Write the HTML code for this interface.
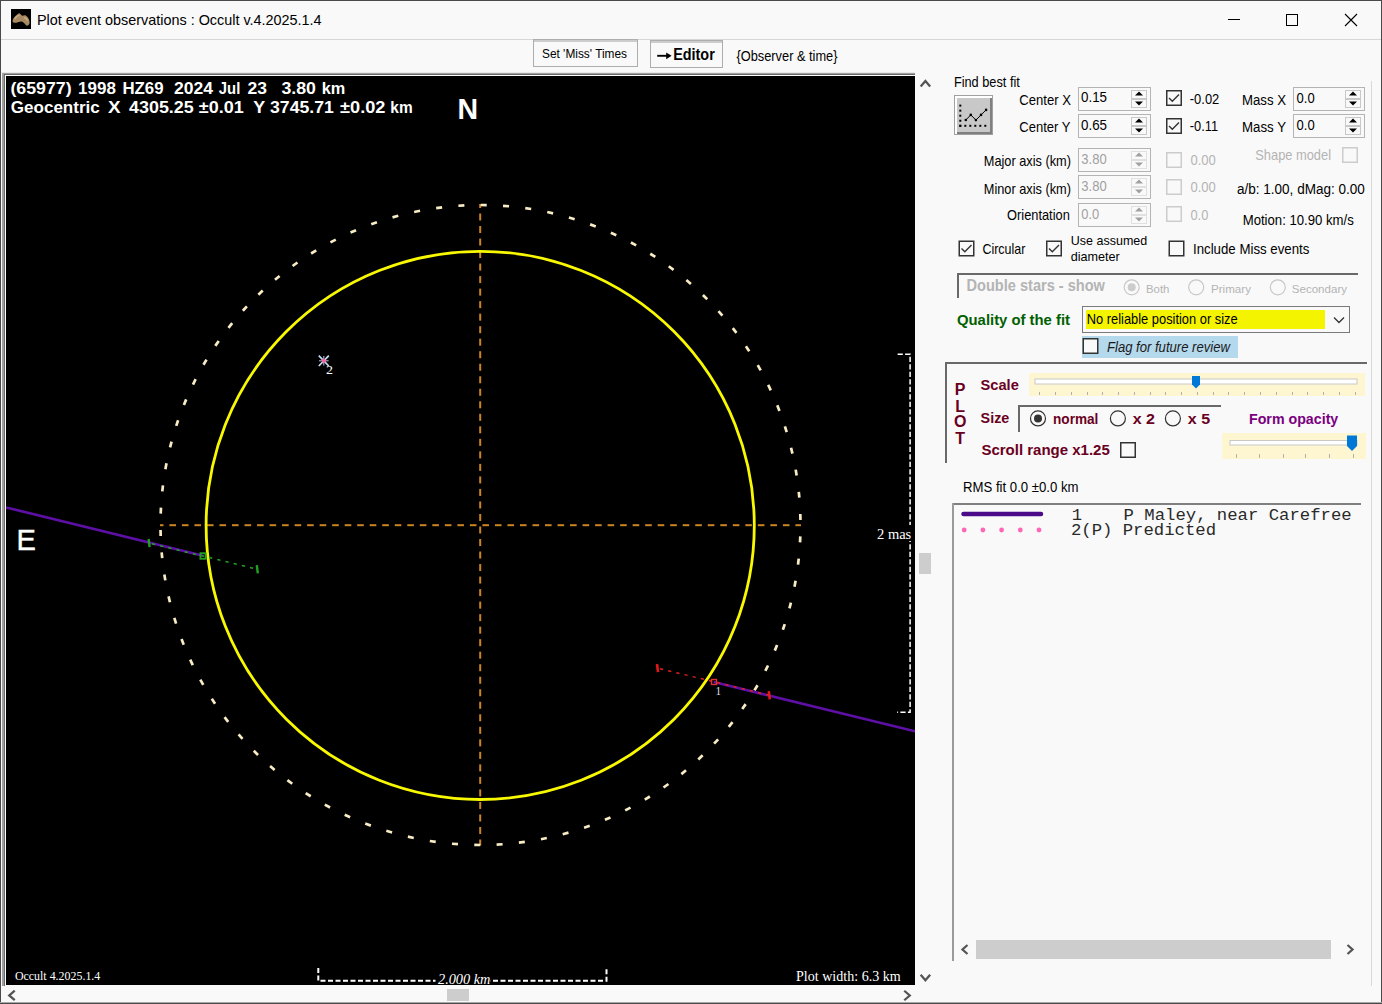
<!DOCTYPE html>
<html><head><meta charset="utf-8"><title>Plot event observations</title>
<style>html,body{margin:0;padding:0;background:#f9f9f9;}body{width:1382px;height:1004px;overflow:hidden;font-family:"Liberation Sans",sans-serif;}svg{display:block}</style>
</head><body>
<svg width="1382" height="1004" viewBox="0 0 1382 1004">
<defs><clipPath id="plotclip"><rect x="6" y="76" width="909" height="909"/></clipPath></defs>
<rect x="0" y="0" width="1382" height="1004" fill="#f9f9f9" />
<rect x="0" y="0" width="1382" height="1" fill="#4a4a4a" />
<rect x="0" y="0" width="1" height="1004" fill="#4a4a4a" />
<rect x="1381" y="0" width="1" height="1004" fill="#4a4a4a" />
<rect x="0" y="1002" width="1382" height="1" fill="#a8a8a8" />
<rect x="0" y="1003" width="1382" height="1" fill="#4a4a4a" />
<rect x="1" y="39" width="1380" height="1" fill="#d6d6d6" />
<rect x="11" y="9" width="20" height="20" fill="#000" />
<path d="M12.6 21.5 C12.5 19 14 17 16 15.5 C17.5 14 18.5 13 19.6 13.2 C20.5 13.5 21 15.5 22.5 15.8 C24 15.2 25.5 14.8 27 16.5 C28.5 18 29.8 20.5 29.6 23 C29.2 25 27.5 26 26.5 25.5 C25 24.5 23.5 22 22 21.5 C20 21 18 22.5 16 22.8 C14.5 23 13 22.8 12.6 21.5 Z" stroke="none" stroke-width="1" fill="#a88a62" />
<path d="M15 19 C16 17 18 15.5 19.5 15.5 M24 18 C25.5 17.5 27 18.5 27.5 21" stroke="#d0b488" stroke-width="1.2" fill="none" />
<text x="37.00" y="24.70" font-family="Liberation Sans" font-size="15" textLength="284.62" lengthAdjust="spacingAndGlyphs" fill="#000"  xml:space="preserve">Plot event observations : Occult v.4.2025.1.4</text>
<rect x="1228" y="19" width="12" height="1" fill="#000" />
<rect x="1286.5" y="14.5" width="11" height="11" fill="none" stroke="#000" stroke-width="1"/>
<path d="M1345 14 L1357 26 M1357 14 L1345 26" stroke="#000" stroke-width="1.1" fill="none" />
<rect x="533.5" y="39.5" width="104" height="27" fill="#f9f9f9" stroke="#adadad" stroke-width="1"/>
<rect x="534" y="40" width="103" height="2" fill="#cccccc" />
<text x="542.00" y="57.50" font-family="Liberation Sans" font-size="12.2" textLength="85.01" lengthAdjust="spacingAndGlyphs" fill="#000"  xml:space="preserve">Set 'Miss' Times</text>
<rect x="650.5" y="40.5" width="72" height="27" fill="#f9f9f9" stroke="#adadad" stroke-width="1"/>
<rect x="651" y="41" width="71" height="2" fill="#cccccc" />
<path d="M657.2 55.8 L669.5 55.8" stroke="#000" stroke-width="1.9" fill="none" />
<path d="M666.2 52.4 L671.6 55.8 L666.2 59.2 Z" stroke="none" stroke-width="1" fill="#000" />
<text x="673.20" y="60.00" font-family="Liberation Sans" font-size="16.3" font-weight="bold" textLength="41.58" lengthAdjust="spacingAndGlyphs" fill="#000"  xml:space="preserve">Editor</text>
<text x="736.50" y="61.20" font-family="Liberation Sans" font-size="14" textLength="101.00" lengthAdjust="spacingAndGlyphs" fill="#000"  xml:space="preserve">{Observer &amp; time}</text>
<rect x="1" y="72" width="914" height="1" fill="#e8e8e8" />
<rect x="2" y="73" width="913" height="1" fill="#a0a0a0" />
<rect x="2" y="73" width="2" height="913" fill="#a0a0a0" />
<rect x="4" y="74" width="911" height="1" fill="#696969" />
<rect x="4" y="74" width="1" height="912" fill="#696969" />
<rect x="5" y="75" width="910" height="1" fill="#ffffff" />
<rect x="5" y="75" width="1" height="911" fill="#ffffff" />
<rect x="6" y="76" width="909" height="909" fill="#000" />
<g clip-path="url(#plotclip)">
<rect x="160.00" y="524.2" width="3.48" height="2" fill="#cc8422" />
<rect x="169.40" y="524.2" width="6.60" height="2" fill="#cc8422" />
<rect x="181.92" y="524.2" width="6.60" height="2" fill="#cc8422" />
<rect x="194.44" y="524.2" width="6.60" height="2" fill="#cc8422" />
<rect x="206.96" y="524.2" width="6.60" height="2" fill="#cc8422" />
<rect x="219.48" y="524.2" width="6.60" height="2" fill="#cc8422" />
<rect x="232.00" y="524.2" width="6.60" height="2" fill="#cc8422" />
<rect x="244.52" y="524.2" width="6.60" height="2" fill="#cc8422" />
<rect x="257.04" y="524.2" width="6.60" height="2" fill="#cc8422" />
<rect x="269.56" y="524.2" width="6.60" height="2" fill="#cc8422" />
<rect x="282.08" y="524.2" width="6.60" height="2" fill="#cc8422" />
<rect x="294.60" y="524.2" width="6.60" height="2" fill="#cc8422" />
<rect x="307.12" y="524.2" width="6.60" height="2" fill="#cc8422" />
<rect x="319.64" y="524.2" width="6.60" height="2" fill="#cc8422" />
<rect x="332.16" y="524.2" width="6.60" height="2" fill="#cc8422" />
<rect x="344.68" y="524.2" width="6.60" height="2" fill="#cc8422" />
<rect x="357.20" y="524.2" width="6.60" height="2" fill="#cc8422" />
<rect x="369.72" y="524.2" width="6.60" height="2" fill="#cc8422" />
<rect x="382.24" y="524.2" width="6.60" height="2" fill="#cc8422" />
<rect x="394.76" y="524.2" width="6.60" height="2" fill="#cc8422" />
<rect x="407.28" y="524.2" width="6.60" height="2" fill="#cc8422" />
<rect x="419.80" y="524.2" width="6.60" height="2" fill="#cc8422" />
<rect x="432.32" y="524.2" width="6.60" height="2" fill="#cc8422" />
<rect x="444.84" y="524.2" width="6.60" height="2" fill="#cc8422" />
<rect x="457.36" y="524.2" width="6.60" height="2" fill="#cc8422" />
<rect x="469.88" y="524.2" width="6.60" height="2" fill="#cc8422" />
<rect x="482.40" y="524.2" width="6.60" height="2" fill="#cc8422" />
<rect x="494.92" y="524.2" width="6.60" height="2" fill="#cc8422" />
<rect x="507.44" y="524.2" width="6.60" height="2" fill="#cc8422" />
<rect x="519.96" y="524.2" width="6.60" height="2" fill="#cc8422" />
<rect x="532.48" y="524.2" width="6.60" height="2" fill="#cc8422" />
<rect x="545.00" y="524.2" width="6.60" height="2" fill="#cc8422" />
<rect x="557.52" y="524.2" width="6.60" height="2" fill="#cc8422" />
<rect x="570.04" y="524.2" width="6.60" height="2" fill="#cc8422" />
<rect x="582.56" y="524.2" width="6.60" height="2" fill="#cc8422" />
<rect x="595.08" y="524.2" width="6.60" height="2" fill="#cc8422" />
<rect x="607.60" y="524.2" width="6.60" height="2" fill="#cc8422" />
<rect x="620.12" y="524.2" width="6.60" height="2" fill="#cc8422" />
<rect x="632.64" y="524.2" width="6.60" height="2" fill="#cc8422" />
<rect x="645.16" y="524.2" width="6.60" height="2" fill="#cc8422" />
<rect x="657.68" y="524.2" width="6.60" height="2" fill="#cc8422" />
<rect x="670.20" y="524.2" width="6.60" height="2" fill="#cc8422" />
<rect x="682.72" y="524.2" width="6.60" height="2" fill="#cc8422" />
<rect x="695.24" y="524.2" width="6.60" height="2" fill="#cc8422" />
<rect x="707.76" y="524.2" width="6.60" height="2" fill="#cc8422" />
<rect x="720.28" y="524.2" width="6.60" height="2" fill="#cc8422" />
<rect x="732.80" y="524.2" width="6.60" height="2" fill="#cc8422" />
<rect x="745.32" y="524.2" width="6.60" height="2" fill="#cc8422" />
<rect x="757.84" y="524.2" width="6.60" height="2" fill="#cc8422" />
<rect x="770.36" y="524.2" width="6.60" height="2" fill="#cc8422" />
<rect x="782.88" y="524.2" width="6.60" height="2" fill="#cc8422" />
<rect x="795.40" y="524.2" width="5.60" height="2" fill="#cc8422" />
<rect x="479.2" y="204.00" width="2" height="3.98" fill="#cc8422" />
<rect x="479.2" y="213.50" width="2" height="7.00" fill="#cc8422" />
<rect x="479.2" y="226.02" width="2" height="7.00" fill="#cc8422" />
<rect x="479.2" y="238.54" width="2" height="7.00" fill="#cc8422" />
<rect x="479.2" y="251.06" width="2" height="7.00" fill="#cc8422" />
<rect x="479.2" y="263.58" width="2" height="7.00" fill="#cc8422" />
<rect x="479.2" y="276.10" width="2" height="7.00" fill="#cc8422" />
<rect x="479.2" y="288.62" width="2" height="7.00" fill="#cc8422" />
<rect x="479.2" y="301.14" width="2" height="7.00" fill="#cc8422" />
<rect x="479.2" y="313.66" width="2" height="7.00" fill="#cc8422" />
<rect x="479.2" y="326.18" width="2" height="7.00" fill="#cc8422" />
<rect x="479.2" y="338.70" width="2" height="7.00" fill="#cc8422" />
<rect x="479.2" y="351.22" width="2" height="7.00" fill="#cc8422" />
<rect x="479.2" y="363.74" width="2" height="7.00" fill="#cc8422" />
<rect x="479.2" y="376.26" width="2" height="7.00" fill="#cc8422" />
<rect x="479.2" y="388.78" width="2" height="7.00" fill="#cc8422" />
<rect x="479.2" y="401.30" width="2" height="7.00" fill="#cc8422" />
<rect x="479.2" y="413.82" width="2" height="7.00" fill="#cc8422" />
<rect x="479.2" y="426.34" width="2" height="7.00" fill="#cc8422" />
<rect x="479.2" y="438.86" width="2" height="7.00" fill="#cc8422" />
<rect x="479.2" y="451.38" width="2" height="7.00" fill="#cc8422" />
<rect x="479.2" y="463.90" width="2" height="7.00" fill="#cc8422" />
<rect x="479.2" y="476.42" width="2" height="7.00" fill="#cc8422" />
<rect x="479.2" y="488.94" width="2" height="7.00" fill="#cc8422" />
<rect x="479.2" y="501.46" width="2" height="7.00" fill="#cc8422" />
<rect x="479.2" y="513.98" width="2" height="7.00" fill="#cc8422" />
<rect x="479.2" y="526.50" width="2" height="7.00" fill="#cc8422" />
<rect x="479.2" y="539.02" width="2" height="7.00" fill="#cc8422" />
<rect x="479.2" y="551.54" width="2" height="7.00" fill="#cc8422" />
<rect x="479.2" y="564.06" width="2" height="7.00" fill="#cc8422" />
<rect x="479.2" y="576.58" width="2" height="7.00" fill="#cc8422" />
<rect x="479.2" y="589.10" width="2" height="7.00" fill="#cc8422" />
<rect x="479.2" y="601.62" width="2" height="7.00" fill="#cc8422" />
<rect x="479.2" y="614.14" width="2" height="7.00" fill="#cc8422" />
<rect x="479.2" y="626.66" width="2" height="7.00" fill="#cc8422" />
<rect x="479.2" y="639.18" width="2" height="7.00" fill="#cc8422" />
<rect x="479.2" y="651.70" width="2" height="7.00" fill="#cc8422" />
<rect x="479.2" y="664.22" width="2" height="7.00" fill="#cc8422" />
<rect x="479.2" y="676.74" width="2" height="7.00" fill="#cc8422" />
<rect x="479.2" y="689.26" width="2" height="7.00" fill="#cc8422" />
<rect x="479.2" y="701.78" width="2" height="7.00" fill="#cc8422" />
<rect x="479.2" y="714.30" width="2" height="7.00" fill="#cc8422" />
<rect x="479.2" y="726.82" width="2" height="7.00" fill="#cc8422" />
<rect x="479.2" y="739.34" width="2" height="7.00" fill="#cc8422" />
<rect x="479.2" y="751.86" width="2" height="7.00" fill="#cc8422" />
<rect x="479.2" y="764.38" width="2" height="7.00" fill="#cc8422" />
<rect x="479.2" y="776.90" width="2" height="7.00" fill="#cc8422" />
<rect x="479.2" y="789.42" width="2" height="7.00" fill="#cc8422" />
<rect x="479.2" y="801.94" width="2" height="7.00" fill="#cc8422" />
<rect x="479.2" y="814.46" width="2" height="7.00" fill="#cc8422" />
<rect x="479.2" y="826.98" width="2" height="7.00" fill="#cc8422" />
<rect x="479.2" y="839.50" width="2" height="6.00" fill="#cc8422" />
<path d="M800.30 536.40L800.03 542.39M798.72 558.68L798.04 564.64M795.60 580.79L794.50 586.69M790.94 602.64L789.43 608.44M784.77 624.10L782.86 629.79M777.11 645.09L774.81 650.63M768.01 665.48L765.33 670.85M757.51 685.20L754.46 690.36M745.66 704.13L742.26 709.07M732.52 722.19L728.78 726.88M718.15 739.29L714.09 743.71M702.63 755.35L698.27 759.47M686.02 770.28L681.38 774.09M668.41 784.02L663.52 787.50M649.88 796.50L644.76 799.62M630.53 807.65L625.20 810.41M610.45 817.43L604.94 819.81M589.73 825.78L584.08 827.77M568.49 832.67L562.70 834.26M546.81 838.05L540.93 839.24M524.81 841.92L518.86 842.69M502.60 844.24L496.61 844.59M480.27 845.00L474.28 844.94M457.95 844.20L451.97 843.73M435.74 841.85L429.81 840.96M413.75 837.96L407.89 836.65M392.08 832.54L386.33 830.83M370.84 825.62L365.23 823.52M350.14 817.24L344.68 814.75M330.07 807.44L324.80 804.57M310.74 796.26L305.68 793.03M292.23 783.75L287.41 780.18M274.64 769.99L270.08 766.09M258.05 755.03L253.78 750.82M242.54 738.96L238.58 734.46M228.20 721.84L224.55 717.07M215.08 703.76L211.78 698.75M203.26 684.81L200.31 679.58M192.79 665.08L190.21 659.66M183.72 644.67L181.53 639.08M176.09 623.67L174.30 617.95M169.95 602.20L168.56 596.36M165.32 580.35L164.34 574.43M162.23 558.23L161.66 552.26M160.69 535.95L160.54 529.95M160.70 513.61L160.97 507.62M162.28 491.33L162.96 485.37M165.40 469.22L166.50 463.32M170.06 447.37L171.57 441.57M176.23 425.91L178.14 420.22M183.88 404.92L186.19 399.38M192.98 384.52L195.67 379.16M203.48 364.81L206.53 359.64M215.33 345.88L218.74 340.94M228.47 327.82L232.21 323.13M242.84 310.72L246.90 306.30M258.37 294.66L262.72 290.54M274.97 279.73L279.61 275.92M292.58 265.99L297.47 262.51M311.11 253.51L316.23 250.38M330.46 242.35L335.79 239.59M350.54 232.58L356.05 230.19M371.26 224.22L376.92 222.23M392.50 217.34L398.29 215.74M414.18 211.95L420.06 210.76M436.18 208.08L442.13 207.31M458.39 205.76L464.38 205.41M480.72 205.00L486.72 205.06M503.04 205.79L509.02 206.27M525.25 208.14L531.18 209.04M547.24 212.04L553.10 213.34M568.91 217.46L574.66 219.17M590.15 224.37L595.77 226.48M610.85 232.75L616.31 235.25M630.92 242.56L636.19 245.43M650.26 253.74L655.31 256.97M668.76 266.24L673.58 269.82M686.36 280.00L690.91 283.91M702.94 294.96L707.22 299.17M718.45 311.04L722.42 315.54M732.79 328.16L736.44 332.92M745.91 346.23L749.22 351.24M757.73 365.18L760.68 370.41M768.21 384.91L770.78 390.33M777.28 405.32L779.47 410.91M784.90 426.32L786.70 432.04M791.05 447.79L792.44 453.63M795.68 469.64L796.66 475.56M798.77 491.76L799.34 497.73M800.31 514.04L800.46 520.04" stroke="#f8ecc4" stroke-width="2.7" fill="none" />
<circle cx="480.2" cy="525.4" r="274.1" fill="none" stroke="#f8f800" stroke-width="2.8"/>
<path d="M6 507.4 L204 555.9" stroke="#5e10a6" stroke-width="2.6" fill="none" />
<path d="M713.7 682 L915 731.3" stroke="#5e10a6" stroke-width="2.6" fill="none" />
<path d="M152 543.8 L257.3 569.2" stroke="#22a022" stroke-width="1.5" fill="none" stroke-dasharray="3.2 5.2"/>
<path d="M148.6 539 L149.6 547.2 M256.8 565.2 L257.8 573.4" stroke="#22a022" stroke-width="2.4" fill="none" />
<rect x="200.4" y="553.2" width="5.2" height="5.6" fill="none" stroke="#22a022" stroke-width="1.8"/>
<path d="M660 668.7 L769.3 695.2" stroke="#e02020" stroke-width="1.5" fill="none" stroke-dasharray="3.2 5.2"/>
<path d="M657 664 L658 672.2 M768.8 691.1 L769.8 699.3" stroke="#e01818" stroke-width="2.6" fill="none" />
<rect x="711.5" y="679.5" width="5" height="5" fill="none" stroke="#e03030" stroke-width="1.4"/>
<text x="715.80" y="695.20" font-family="Liberation Serif" font-size="13.5" textLength="5.20" lengthAdjust="spacingAndGlyphs" fill="#dde8ff"  xml:space="preserve">1</text>
<path d="M318.8 355.6 L328.8 366 M328.8 355.6 L318.8 366" stroke="#c8dcf4" stroke-width="1.7" fill="none" />
<path d="M323.8 356 L323.8 365.5 M319 360.8 L328.6 360.8" stroke="#b8c8e8" stroke-width="1" fill="none" />
<circle cx="323.8" cy="360.8" r="2" fill="#ff5fa0"/>
<text x="326.00" y="373.80" font-family="Liberation Serif" font-size="13.5" textLength="7.00" lengthAdjust="spacingAndGlyphs" fill="#ffffff"  xml:space="preserve">2</text>
<path d="M897.6 354.3 L910.1 354.3 L910.1 712.3 L897.2 712.3" stroke="#ffffff" stroke-width="1.5" fill="none" stroke-dasharray="5.2 2.3"/>
<rect x="875" y="525" width="36" height="16" fill="#000" />
<text x="877.00" y="538.60" font-family="Liberation Serif" font-size="14.5" fill="#ffffff"  xml:space="preserve">2 mas</text>
<path d="M318.3 968 L318.3 980.8 L606.5 980.8 L606.5 968" stroke="#ffffff" stroke-width="2" fill="none" stroke-dasharray="5 2.5"/>
<rect x="435.5" y="970" width="55" height="14" fill="#000" />
<text x="438.00" y="983.90" font-family="Liberation Serif" font-size="14.3" font-style="italic" fill="#ffffff"  xml:space="preserve">2.000 km</text>
<text x="14.90" y="979.70" font-family="Liberation Serif" font-size="12.3" textLength="85.41" lengthAdjust="spacingAndGlyphs" fill="#ffffff"  xml:space="preserve">Occult 4.2025.1.4</text>
<text x="796.00" y="981.10" font-family="Liberation Serif" font-size="14.5" textLength="104.71" lengthAdjust="spacingAndGlyphs" fill="#ffffff"  xml:space="preserve">Plot width: 6.3 km</text>
<text x="457.60" y="118.90" font-family="Liberation Sans" font-size="30" font-weight="bold" textLength="20.59" lengthAdjust="spacingAndGlyphs" fill="#ffffff"  xml:space="preserve">N</text>
<text x="16.60" y="549.60" font-family="Liberation Sans" font-size="29.8" textLength="19.39" lengthAdjust="spacingAndGlyphs" fill="#ffffff" stroke="#ffffff" stroke-width="0.4" xml:space="preserve">E</text>
<text x="10.40" y="93.90" font-family="Liberation Sans" font-size="17.4" font-weight="bold" textLength="61.19" lengthAdjust="spacingAndGlyphs" fill="#ffffff"  xml:space="preserve">(65977)</text>
<text x="78.10" y="93.90" font-family="Liberation Sans" font-size="17.4" font-weight="bold" textLength="37.79" lengthAdjust="spacingAndGlyphs" fill="#ffffff"  xml:space="preserve">1998</text>
<text x="122.40" y="93.90" font-family="Liberation Sans" font-size="17.4" font-weight="bold" textLength="41.11" lengthAdjust="spacingAndGlyphs" fill="#ffffff"  xml:space="preserve">HZ69</text>
<text x="173.90" y="93.90" font-family="Liberation Sans" font-size="17.4" font-weight="bold" textLength="39.09" lengthAdjust="spacingAndGlyphs" fill="#ffffff"  xml:space="preserve">2024</text>
<text x="218.80" y="93.90" font-family="Liberation Sans" font-size="17.4" font-weight="bold" textLength="21.50" lengthAdjust="spacingAndGlyphs" fill="#ffffff"  xml:space="preserve">Jul</text>
<text x="247.50" y="93.90" font-family="Liberation Sans" font-size="17.4" font-weight="bold" textLength="19.50" lengthAdjust="spacingAndGlyphs" fill="#ffffff"  xml:space="preserve">23</text>
<text x="281.40" y="93.90" font-family="Liberation Sans" font-size="17.4" font-weight="bold" textLength="34.48" lengthAdjust="spacingAndGlyphs" fill="#ffffff"  xml:space="preserve">3.80</text>
<text x="321.70" y="93.90" font-family="Liberation Sans" font-size="17.4" font-weight="bold" textLength="23.51" lengthAdjust="spacingAndGlyphs" fill="#ffffff"  xml:space="preserve">km</text>
<text x="10.80" y="113.00" font-family="Liberation Sans" font-size="17.4" font-weight="bold" textLength="88.99" lengthAdjust="spacingAndGlyphs" fill="#ffffff"  xml:space="preserve">Geocentric</text>
<text x="108.00" y="113.00" font-family="Liberation Sans" font-size="17.4" font-weight="bold" textLength="12.59" lengthAdjust="spacingAndGlyphs" fill="#ffffff"  xml:space="preserve">X</text>
<text x="129.00" y="113.00" font-family="Liberation Sans" font-size="17.4" font-weight="bold" textLength="64.80" lengthAdjust="spacingAndGlyphs" fill="#ffffff"  xml:space="preserve">4305.25</text>
<text x="198.80" y="113.00" font-family="Liberation Sans" font-size="17.4" font-weight="bold" textLength="45.00" lengthAdjust="spacingAndGlyphs" fill="#ffffff"  xml:space="preserve">±0.01</text>
<text x="253.30" y="113.00" font-family="Liberation Sans" font-size="17.4" font-weight="bold" textLength="11.99" lengthAdjust="spacingAndGlyphs" fill="#ffffff"  xml:space="preserve">Y</text>
<text x="270.00" y="113.00" font-family="Liberation Sans" font-size="17.4" font-weight="bold" textLength="63.80" lengthAdjust="spacingAndGlyphs" fill="#ffffff"  xml:space="preserve">3745.71</text>
<text x="340.10" y="113.00" font-family="Liberation Sans" font-size="17.4" font-weight="bold" textLength="45.40" lengthAdjust="spacingAndGlyphs" fill="#ffffff"  xml:space="preserve">±0.02</text>
<text x="390.30" y="113.00" font-family="Liberation Sans" font-size="17.4" font-weight="bold" textLength="22.31" lengthAdjust="spacingAndGlyphs" fill="#ffffff"  xml:space="preserve">km</text>
</g>
<path d="M920.65 86.55 L925.4 81.05 L930.15 86.55" stroke="#555555" stroke-width="2.3" fill="none" stroke-linejoin="miter"/>
<path d="M920.65 974.75 L925.4 980.25 L930.15 974.75" stroke="#555555" stroke-width="2.3" fill="none" stroke-linejoin="miter"/>
<rect x="919" y="553" width="12" height="21" fill="#cdcdcd" />
<path d="M14.75 990.65 L9.25 995.4 L14.75 1000.15" stroke="#555555" stroke-width="2.3" fill="none" stroke-linejoin="miter"/>
<path d="M904.25 990.75 L909.75 995.5 L904.25 1000.25" stroke="#555555" stroke-width="2.3" fill="none" stroke-linejoin="miter"/>
<rect x="447" y="989" width="22" height="12" fill="#cdcdcd" />
<rect x="1371" y="81" width="1" height="905" fill="#d9d9d9" />
<text x="953.90" y="86.50" font-family="Liberation Sans" font-size="15" textLength="65.99" lengthAdjust="spacingAndGlyphs" fill="#000"  xml:space="preserve">Find best fit</text>
<rect x="954" y="95" width="39" height="40" fill="#a0a0a0" />
<rect x="955" y="96" width="37" height="38" fill="#ffffff" />
<rect x="957" y="98" width="35" height="36" fill="#808080" />
<rect x="957" y="98" width="33" height="34" fill="#c8c8c8" />
<rect x="959.3" y="104.6" width="2" height="2" fill="#000" />
<rect x="959.3" y="109.64999999999999" width="2" height="2" fill="#000" />
<rect x="959.3" y="114.69999999999999" width="2" height="2" fill="#000" />
<rect x="959.3" y="119.75" width="2" height="2" fill="#000" />
<rect x="959.3" y="124.8" width="2" height="2" fill="#000" />
<rect x="959.3" y="124.8" width="2" height="2" fill="#000" />
<rect x="964.3" y="124.8" width="2" height="2" fill="#000" />
<rect x="969.3" y="124.8" width="2" height="2" fill="#000" />
<rect x="974.3" y="124.8" width="2" height="2" fill="#000" />
<rect x="979.3" y="124.8" width="2" height="2" fill="#000" />
<rect x="984.3" y="124.8" width="2" height="2" fill="#000" />
<path d="M965.8 120 L970.8 114.9 L975.9 120.1 L981 114.9 L986.1 109.9" stroke="#000" stroke-width="1" fill="none" />
<circle cx="965.8" cy="120" r="1.3" fill="#000"/>
<circle cx="970.8" cy="114.9" r="1.3" fill="#000"/>
<circle cx="975.9" cy="120.1" r="1.3" fill="#000"/>
<circle cx="981" cy="114.9" r="1.3" fill="#000"/>
<circle cx="986.1" cy="109.9" r="1.3" fill="#000"/>
<rect x="1078.5" y="87.5" width="72" height="23" fill="#f9f9f9" stroke="#b4b4b4" stroke-width="1"/>
<rect x="1131.5" y="90.5" width="15" height="17" fill="#f9f9f9" stroke="#c8c8c8" stroke-width="1"/>
<rect x="1132" y="98.0" width="14" height="2" fill="#c8c8c8" />
<path d="M1135.0 95.5 L1139.0 91.5 L1143.0 95.5 Z" stroke="none" stroke-width="1" fill="#000" />
<path d="M1135.0 101.5 L1139.0 105.5 L1143.0 101.5 Z" stroke="none" stroke-width="1" fill="#000" />
<rect x="1078.5" y="114.5" width="72" height="23" fill="#f9f9f9" stroke="#b4b4b4" stroke-width="1"/>
<rect x="1131.5" y="117.5" width="15" height="17" fill="#f9f9f9" stroke="#c8c8c8" stroke-width="1"/>
<rect x="1132" y="125.0" width="14" height="2" fill="#c8c8c8" />
<path d="M1135.0 122.5 L1139.0 118.5 L1143.0 122.5 Z" stroke="none" stroke-width="1" fill="#000" />
<path d="M1135.0 128.5 L1139.0 132.5 L1143.0 128.5 Z" stroke="none" stroke-width="1" fill="#000" />
<rect x="1078.5" y="148.5" width="72" height="23" fill="#f9f9f9" stroke="#b4b4b4" stroke-width="1"/>
<rect x="1131.5" y="151.5" width="15" height="17" fill="#f9f9f9" stroke="#e0e0e0" stroke-width="1"/>
<rect x="1132" y="159.0" width="14" height="2" fill="#e0e0e0" />
<path d="M1135.0 156.5 L1139.0 152.5 L1143.0 156.5 Z" stroke="none" stroke-width="1" fill="#a0a0a0" />
<path d="M1135.0 162.5 L1139.0 166.5 L1143.0 162.5 Z" stroke="none" stroke-width="1" fill="#a0a0a0" />
<rect x="1078.5" y="175.5" width="72" height="23" fill="#f9f9f9" stroke="#b4b4b4" stroke-width="1"/>
<rect x="1131.5" y="178.5" width="15" height="17" fill="#f9f9f9" stroke="#e0e0e0" stroke-width="1"/>
<rect x="1132" y="186.0" width="14" height="2" fill="#e0e0e0" />
<path d="M1135.0 183.5 L1139.0 179.5 L1143.0 183.5 Z" stroke="none" stroke-width="1" fill="#a0a0a0" />
<path d="M1135.0 189.5 L1139.0 193.5 L1143.0 189.5 Z" stroke="none" stroke-width="1" fill="#a0a0a0" />
<rect x="1078.5" y="203.5" width="72" height="23" fill="#f9f9f9" stroke="#b4b4b4" stroke-width="1"/>
<rect x="1131.5" y="206.5" width="15" height="17" fill="#f9f9f9" stroke="#e0e0e0" stroke-width="1"/>
<rect x="1132" y="214.0" width="14" height="2" fill="#e0e0e0" />
<path d="M1135.0 211.5 L1139.0 207.5 L1143.0 211.5 Z" stroke="none" stroke-width="1" fill="#a0a0a0" />
<path d="M1135.0 217.5 L1139.0 221.5 L1143.0 217.5 Z" stroke="none" stroke-width="1" fill="#a0a0a0" />
<rect x="1293.5" y="87.5" width="71" height="23" fill="#f9f9f9" stroke="#b4b4b4" stroke-width="1"/>
<rect x="1345.5" y="90.5" width="15" height="17" fill="#f9f9f9" stroke="#c8c8c8" stroke-width="1"/>
<rect x="1346" y="98.0" width="14" height="2" fill="#c8c8c8" />
<path d="M1349.0 95.5 L1353.0 91.5 L1357.0 95.5 Z" stroke="none" stroke-width="1" fill="#000" />
<path d="M1349.0 101.5 L1353.0 105.5 L1357.0 101.5 Z" stroke="none" stroke-width="1" fill="#000" />
<rect x="1293.5" y="114.5" width="71" height="23" fill="#f9f9f9" stroke="#b4b4b4" stroke-width="1"/>
<rect x="1345.5" y="117.5" width="15" height="17" fill="#f9f9f9" stroke="#c8c8c8" stroke-width="1"/>
<rect x="1346" y="125.0" width="14" height="2" fill="#c8c8c8" />
<path d="M1349.0 122.5 L1353.0 118.5 L1357.0 122.5 Z" stroke="none" stroke-width="1" fill="#000" />
<path d="M1349.0 128.5 L1353.0 132.5 L1357.0 128.5 Z" stroke="none" stroke-width="1" fill="#000" />
<text x="1019.30" y="104.80" font-family="Liberation Sans" font-size="15" textLength="51.69" lengthAdjust="spacingAndGlyphs" fill="#000"  xml:space="preserve">Center X</text>
<text x="1019.30" y="132.00" font-family="Liberation Sans" font-size="15" textLength="51.21" lengthAdjust="spacingAndGlyphs" fill="#000"  xml:space="preserve">Center Y</text>
<text x="1081.00" y="102.00" font-family="Liberation Sans" font-size="15.5" textLength="25.98" lengthAdjust="spacingAndGlyphs" fill="#000"  xml:space="preserve">0.15</text>
<text x="1081.00" y="129.80" font-family="Liberation Sans" font-size="15.5" textLength="25.98" lengthAdjust="spacingAndGlyphs" fill="#000"  xml:space="preserve">0.65</text>
<text x="1242.00" y="104.80" font-family="Liberation Sans" font-size="13.8" textLength="43.99" lengthAdjust="spacingAndGlyphs" fill="#000"  xml:space="preserve">Mass X</text>
<text x="1242.00" y="132.30" font-family="Liberation Sans" font-size="13.8" textLength="44.01" lengthAdjust="spacingAndGlyphs" fill="#000"  xml:space="preserve">Mass Y</text>
<text x="1296.60" y="102.60" font-family="Liberation Sans" font-size="15.5" textLength="18.10" lengthAdjust="spacingAndGlyphs" fill="#000"  xml:space="preserve">0.0</text>
<text x="1296.60" y="130.00" font-family="Liberation Sans" font-size="15.5" textLength="18.10" lengthAdjust="spacingAndGlyphs" fill="#000"  xml:space="preserve">0.0</text>
<text x="983.80" y="166.20" font-family="Liberation Sans" font-size="15" textLength="87.21" lengthAdjust="spacingAndGlyphs" fill="#000"  xml:space="preserve">Major axis (km)</text>
<text x="983.80" y="193.70" font-family="Liberation Sans" font-size="15" textLength="87.21" lengthAdjust="spacingAndGlyphs" fill="#000"  xml:space="preserve">Minor axis (km)</text>
<text x="1007.10" y="220.00" font-family="Liberation Sans" font-size="15" textLength="62.69" lengthAdjust="spacingAndGlyphs" fill="#000"  xml:space="preserve">Orientation</text>
<text x="1081.30" y="164.10" font-family="Liberation Sans" font-size="15" textLength="25.39" lengthAdjust="spacingAndGlyphs" fill="#a0a0a0"  xml:space="preserve">3.80</text>
<text x="1081.30" y="191.20" font-family="Liberation Sans" font-size="15" textLength="25.39" lengthAdjust="spacingAndGlyphs" fill="#a0a0a0"  xml:space="preserve">3.80</text>
<text x="1081.30" y="219.00" font-family="Liberation Sans" font-size="15" textLength="17.90" lengthAdjust="spacingAndGlyphs" fill="#a0a0a0"  xml:space="preserve">0.0</text>
<rect x="1166.75" y="90.75" width="14.5" height="14.5" fill="#f9f9f9" stroke="#333333" stroke-width="1.5"/>
<path d="M1169 98 L1172.3 101.3 L1179 94.5" stroke="#333333" stroke-width="1.4" fill="none" />
<rect x="1166.75" y="118.75" width="14.5" height="14.5" fill="#f9f9f9" stroke="#333333" stroke-width="1.5"/>
<path d="M1169 126 L1172.3 129.3 L1179 122.5" stroke="#333333" stroke-width="1.4" fill="none" />
<text x="1189.80" y="103.70" font-family="Liberation Sans" font-size="15" textLength="29.49" lengthAdjust="spacingAndGlyphs" fill="#000"  xml:space="preserve">-0.02</text>
<text x="1189.80" y="130.90" font-family="Liberation Sans" font-size="15" textLength="28.30" lengthAdjust="spacingAndGlyphs" fill="#000"  xml:space="preserve">-0.11</text>
<rect x="1166.75" y="152.75" width="14.5" height="14.5" fill="#f9f9f9" stroke="#cccccc" stroke-width="1.5"/>
<rect x="1166.75" y="179.75" width="14.5" height="14.5" fill="#f9f9f9" stroke="#cccccc" stroke-width="1.5"/>
<rect x="1166.75" y="206.75" width="14.5" height="14.5" fill="#f9f9f9" stroke="#cccccc" stroke-width="1.5"/>
<text x="1190.40" y="165.00" font-family="Liberation Sans" font-size="15" textLength="25.39" lengthAdjust="spacingAndGlyphs" fill="#b4b4b4"  xml:space="preserve">0.00</text>
<text x="1190.40" y="192.30" font-family="Liberation Sans" font-size="15" textLength="25.39" lengthAdjust="spacingAndGlyphs" fill="#b4b4b4"  xml:space="preserve">0.00</text>
<text x="1190.40" y="220.00" font-family="Liberation Sans" font-size="15" textLength="17.90" lengthAdjust="spacingAndGlyphs" fill="#b4b4b4"  xml:space="preserve">0.0</text>
<text x="1255.30" y="160.40" font-family="Liberation Sans" font-size="15" textLength="75.71" lengthAdjust="spacingAndGlyphs" fill="#b4b4b4"  xml:space="preserve">Shape model</text>
<rect x="1342.75" y="147.75" width="14.5" height="14.5" fill="#f9f9f9" stroke="#cccccc" stroke-width="1.5"/>
<text x="1237.00" y="194.00" font-family="Liberation Sans" font-size="14" textLength="127.79" lengthAdjust="spacingAndGlyphs" fill="#000"  xml:space="preserve">a/b: 1.00, dMag: 0.00</text>
<text x="1242.70" y="225.30" font-family="Liberation Sans" font-size="13.8" textLength="111.11" lengthAdjust="spacingAndGlyphs" fill="#000"  xml:space="preserve">Motion: 10.90 km/s</text>
<rect x="959.25" y="241.25" width="14.5" height="14.5" fill="#f9f9f9" stroke="#333333" stroke-width="1.5"/>
<path d="M961.5 248.5 L964.8 251.8 L971.5 245.0" stroke="#333333" stroke-width="1.4" fill="none" />
<text x="982.40" y="253.50" font-family="Liberation Sans" font-size="15" textLength="43.00" lengthAdjust="spacingAndGlyphs" fill="#000"  xml:space="preserve">Circular</text>
<rect x="1046.75" y="241.25" width="14.5" height="14.5" fill="#f9f9f9" stroke="#333333" stroke-width="1.5"/>
<path d="M1049 248.5 L1052.3 251.8 L1059 245.0" stroke="#333333" stroke-width="1.4" fill="none" />
<text x="1070.80" y="244.70" font-family="Liberation Sans" font-size="12.6" textLength="76.39" lengthAdjust="spacingAndGlyphs" fill="#000"  xml:space="preserve">Use assumed</text>
<text x="1070.80" y="260.60" font-family="Liberation Sans" font-size="12.6" fill="#000"  xml:space="preserve">diameter</text>
<rect x="1169.25" y="241.25" width="14.5" height="14.5" fill="#f9f9f9" stroke="#333333" stroke-width="1.5"/>
<text x="1193.00" y="253.70" font-family="Liberation Sans" font-size="15" textLength="116.39" lengthAdjust="spacingAndGlyphs" fill="#000"  xml:space="preserve">Include Miss events</text>
<rect x="957" y="273" width="401" height="2" fill="#696969" />
<rect x="957" y="273" width="2" height="25" fill="#696969" />
<text x="966.50" y="291.30" font-family="Liberation Sans" font-size="15.8" font-weight="bold" textLength="138.45" lengthAdjust="spacingAndGlyphs" fill="#b4b4b4"  xml:space="preserve">Double stars - show</text>
<circle cx="1131.7" cy="287.3" r="7.5" fill="#f9f9f9" stroke="#c8c8c8" stroke-width="1.2"/>
<circle cx="1131.7" cy="287.3" r="4" fill="#cccccc"/>
<text x="1146.00" y="292.60" font-family="Liberation Sans" font-size="11.8" textLength="23.40" lengthAdjust="spacingAndGlyphs" fill="#b4b4b4"  xml:space="preserve">Both</text>
<circle cx="1196.2" cy="287.3" r="7.5" fill="#f9f9f9" stroke="#c8c8c8" stroke-width="1.2"/>
<text x="1211.00" y="292.60" font-family="Liberation Sans" font-size="11.8" textLength="39.99" lengthAdjust="spacingAndGlyphs" fill="#b4b4b4"  xml:space="preserve">Primary</text>
<circle cx="1277.8" cy="287.3" r="7.5" fill="#f9f9f9" stroke="#c8c8c8" stroke-width="1.2"/>
<text x="1291.80" y="292.60" font-family="Liberation Sans" font-size="11.8" textLength="55.21" lengthAdjust="spacingAndGlyphs" fill="#b4b4b4"  xml:space="preserve">Secondary</text>
<text x="957.00" y="324.70" font-family="Liberation Sans" font-size="15" font-weight="bold" textLength="113.02" lengthAdjust="spacingAndGlyphs" fill="#006000"  xml:space="preserve">Quality of the fit</text>
<rect x="1082.5" y="306.5" width="267" height="26" fill="#f9f9f9" stroke="#7a7a7a" stroke-width="1"/>
<rect x="1086" y="310" width="239" height="19" fill="#f4f400" />
<text x="1086.70" y="324.00" font-family="Liberation Sans" font-size="14.2" textLength="151.01" lengthAdjust="spacingAndGlyphs" fill="#000"  xml:space="preserve">No reliable position or size</text>
<path d="M1334 317.5 L1339 322.5 L1344 317.5" stroke="#333" stroke-width="1.3" fill="none" />
<rect x="1082" y="336" width="156" height="22" fill="#b4d8ec" />
<rect x="1083.25" y="338.75" width="14.5" height="14.5" fill="#f9f9f9" stroke="#333333" stroke-width="1.5"/>
<text x="1107.00" y="351.70" font-family="Liberation Sans" font-size="14.5" font-style="italic" textLength="122.89" lengthAdjust="spacingAndGlyphs" fill="#1a1a1a"  xml:space="preserve">Flag for future review</text>
<rect x="945" y="362" width="422" height="2" fill="#696969" />
<rect x="945" y="362" width="2" height="101" fill="#696969" />
<text x="954.86" y="395.10" font-family="Liberation Sans" font-size="16" font-weight="bold" fill="#6a0022"  xml:space="preserve">P</text>
<text x="955.32" y="411.60" font-family="Liberation Sans" font-size="16" font-weight="bold" fill="#6a0022"  xml:space="preserve">L</text>
<text x="953.98" y="427.40" font-family="Liberation Sans" font-size="16" font-weight="bold" fill="#6a0022"  xml:space="preserve">O</text>
<text x="955.32" y="443.70" font-family="Liberation Sans" font-size="16" font-weight="bold" fill="#6a0022"  xml:space="preserve">T</text>
<text x="980.60" y="389.70" font-family="Liberation Sans" font-size="15.5" font-weight="bold" textLength="38.21" lengthAdjust="spacingAndGlyphs" fill="#6a0022"  xml:space="preserve">Scale</text>
<rect x="1029" y="373" width="336" height="23" fill="#fdf6d0" />
<rect x="1035" y="379" width="322" height="5" fill="#ffffff" stroke="#c8c8c8" stroke-width="1"/>
<rect x="1039" y="392" width="1" height="3" fill="#b0b0b0" />
<rect x="1055" y="392" width="1" height="3" fill="#b0b0b0" />
<rect x="1071" y="392" width="1" height="3" fill="#b0b0b0" />
<rect x="1087" y="392" width="1" height="3" fill="#b0b0b0" />
<rect x="1102" y="392" width="1" height="3" fill="#b0b0b0" />
<rect x="1118" y="392" width="1" height="3" fill="#b0b0b0" />
<rect x="1134" y="392" width="1" height="3" fill="#b0b0b0" />
<rect x="1150" y="392" width="1" height="3" fill="#b0b0b0" />
<rect x="1165" y="392" width="1" height="3" fill="#b0b0b0" />
<rect x="1181" y="392" width="1" height="3" fill="#b0b0b0" />
<rect x="1197" y="392" width="1" height="3" fill="#b0b0b0" />
<rect x="1213" y="392" width="1" height="3" fill="#b0b0b0" />
<rect x="1228" y="392" width="1" height="3" fill="#b0b0b0" />
<rect x="1244" y="392" width="1" height="3" fill="#b0b0b0" />
<rect x="1260" y="392" width="1" height="3" fill="#b0b0b0" />
<rect x="1276" y="392" width="1" height="3" fill="#b0b0b0" />
<rect x="1292" y="392" width="1" height="3" fill="#b0b0b0" />
<rect x="1307" y="392" width="1" height="3" fill="#b0b0b0" />
<rect x="1323" y="392" width="1" height="3" fill="#b0b0b0" />
<rect x="1339" y="392" width="1" height="3" fill="#b0b0b0" />
<rect x="1355" y="392" width="1" height="3" fill="#b0b0b0" />
<path d="M1192 376 L1200 376 L1200 384.5 L1196 388.5 L1192 384.5 Z" stroke="none" stroke-width="1" fill="#0078d7" />
<text x="980.60" y="422.70" font-family="Liberation Sans" font-size="15.2" font-weight="bold" textLength="28.71" lengthAdjust="spacingAndGlyphs" fill="#6a0022"  xml:space="preserve">Size</text>
<rect x="1018" y="405" width="203" height="2" fill="#696969" />
<rect x="1018" y="405" width="2" height="27" fill="#696969" />
<circle cx="1038" cy="418.4" r="7.5" fill="#f9f9f9" stroke="#333333" stroke-width="1.2"/>
<circle cx="1038" cy="418.4" r="4" fill="#333333"/>
<text x="1053.00" y="423.50" font-family="Liberation Sans" font-size="14.5" font-weight="bold" textLength="45.39" lengthAdjust="spacingAndGlyphs" fill="#6a0022"  xml:space="preserve">normal</text>
<circle cx="1117.9" cy="418.4" r="7.5" fill="#f9f9f9" stroke="#333333" stroke-width="1.2"/>
<text x="1132.70" y="423.50" font-family="Liberation Sans" font-size="14.5" font-weight="bold" textLength="22.30" lengthAdjust="spacingAndGlyphs" fill="#6a0022"  xml:space="preserve">x 2</text>
<circle cx="1172.9" cy="418.4" r="7.5" fill="#f9f9f9" stroke="#333333" stroke-width="1.2"/>
<text x="1187.80" y="423.50" font-family="Liberation Sans" font-size="14.5" font-weight="bold" textLength="22.30" lengthAdjust="spacingAndGlyphs" fill="#6a0022"  xml:space="preserve">x 5</text>
<text x="1249.00" y="424.00" font-family="Liberation Sans" font-size="15.2" font-weight="bold" textLength="89.29" lengthAdjust="spacingAndGlyphs" fill="#7a0080"  xml:space="preserve">Form opacity</text>
<rect x="1222" y="433" width="144" height="26" fill="#fdf6d0" />
<rect x="1230" y="440.5" width="127" height="4.5" fill="#ffffff" stroke="#c8c8c8" stroke-width="1"/>
<rect x="1236" y="454" width="1" height="4" fill="#b0b0b0" />
<rect x="1259" y="454" width="1" height="4" fill="#b0b0b0" />
<rect x="1283" y="454" width="1" height="4" fill="#b0b0b0" />
<rect x="1305" y="454" width="1" height="4" fill="#b0b0b0" />
<rect x="1329" y="454" width="1" height="4" fill="#b0b0b0" />
<rect x="1353" y="454" width="1" height="4" fill="#b0b0b0" />
<path d="M1347 435.5 L1357 435.5 L1357 446 L1352 451 L1347 446 Z" stroke="none" stroke-width="1" fill="#0078d7" />
<text x="981.40" y="454.50" font-family="Liberation Sans" font-size="15" font-weight="bold" fill="#6a0022"  xml:space="preserve">Scroll range x1.25</text>
<rect x="1120.75" y="442.75" width="14.5" height="14.5" fill="#f9f9f9" stroke="#333333" stroke-width="1.5"/>
<text x="963.00" y="491.50" font-family="Liberation Sans" font-size="15.5" textLength="115.52" lengthAdjust="spacingAndGlyphs" fill="#000"  xml:space="preserve">RMS fit 0.0 ±0.0 km</text>
<rect x="952" y="503" width="409" height="2" fill="#808080" />
<rect x="952" y="503" width="2" height="458" fill="#9a9a9a" />
<path d="M963.5 514 L1041 514" stroke="#4b0a8a" stroke-width="4.5" fill="none" stroke-linecap="round"/>
<circle cx="964.2" cy="530" r="2.4" fill="#ff66b8"/>
<circle cx="982.9" cy="530" r="2.4" fill="#ff66b8"/>
<circle cx="1001.6" cy="530" r="2.4" fill="#ff66b8"/>
<circle cx="1020.3" cy="530" r="2.4" fill="#ff66b8"/>
<circle cx="1039.0" cy="530" r="2.4" fill="#ff66b8"/>
<text x="1071.70" y="520.20" font-family="Liberation Mono" font-size="17.3" fill="#2a2a2a"  xml:space="preserve">1    P Maley, near Carefree</text>
<text x="1070.90" y="535.30" font-family="Liberation Mono" font-size="17.3" fill="#2a2a2a"  xml:space="preserve">2(P) Predicted</text>
<path d="M967.5 945.0 L962.5 949.5 L967.5 954.0" stroke="#555555" stroke-width="2.3" fill="none" stroke-linejoin="miter"/>
<rect x="976" y="940" width="355" height="19" fill="#cdcdcd" />
<path d="M1347.5 945.0 L1352.5 949.5 L1347.5 954.0" stroke="#555555" stroke-width="2.3" fill="none" stroke-linejoin="miter"/>
</svg>
</body></html>
